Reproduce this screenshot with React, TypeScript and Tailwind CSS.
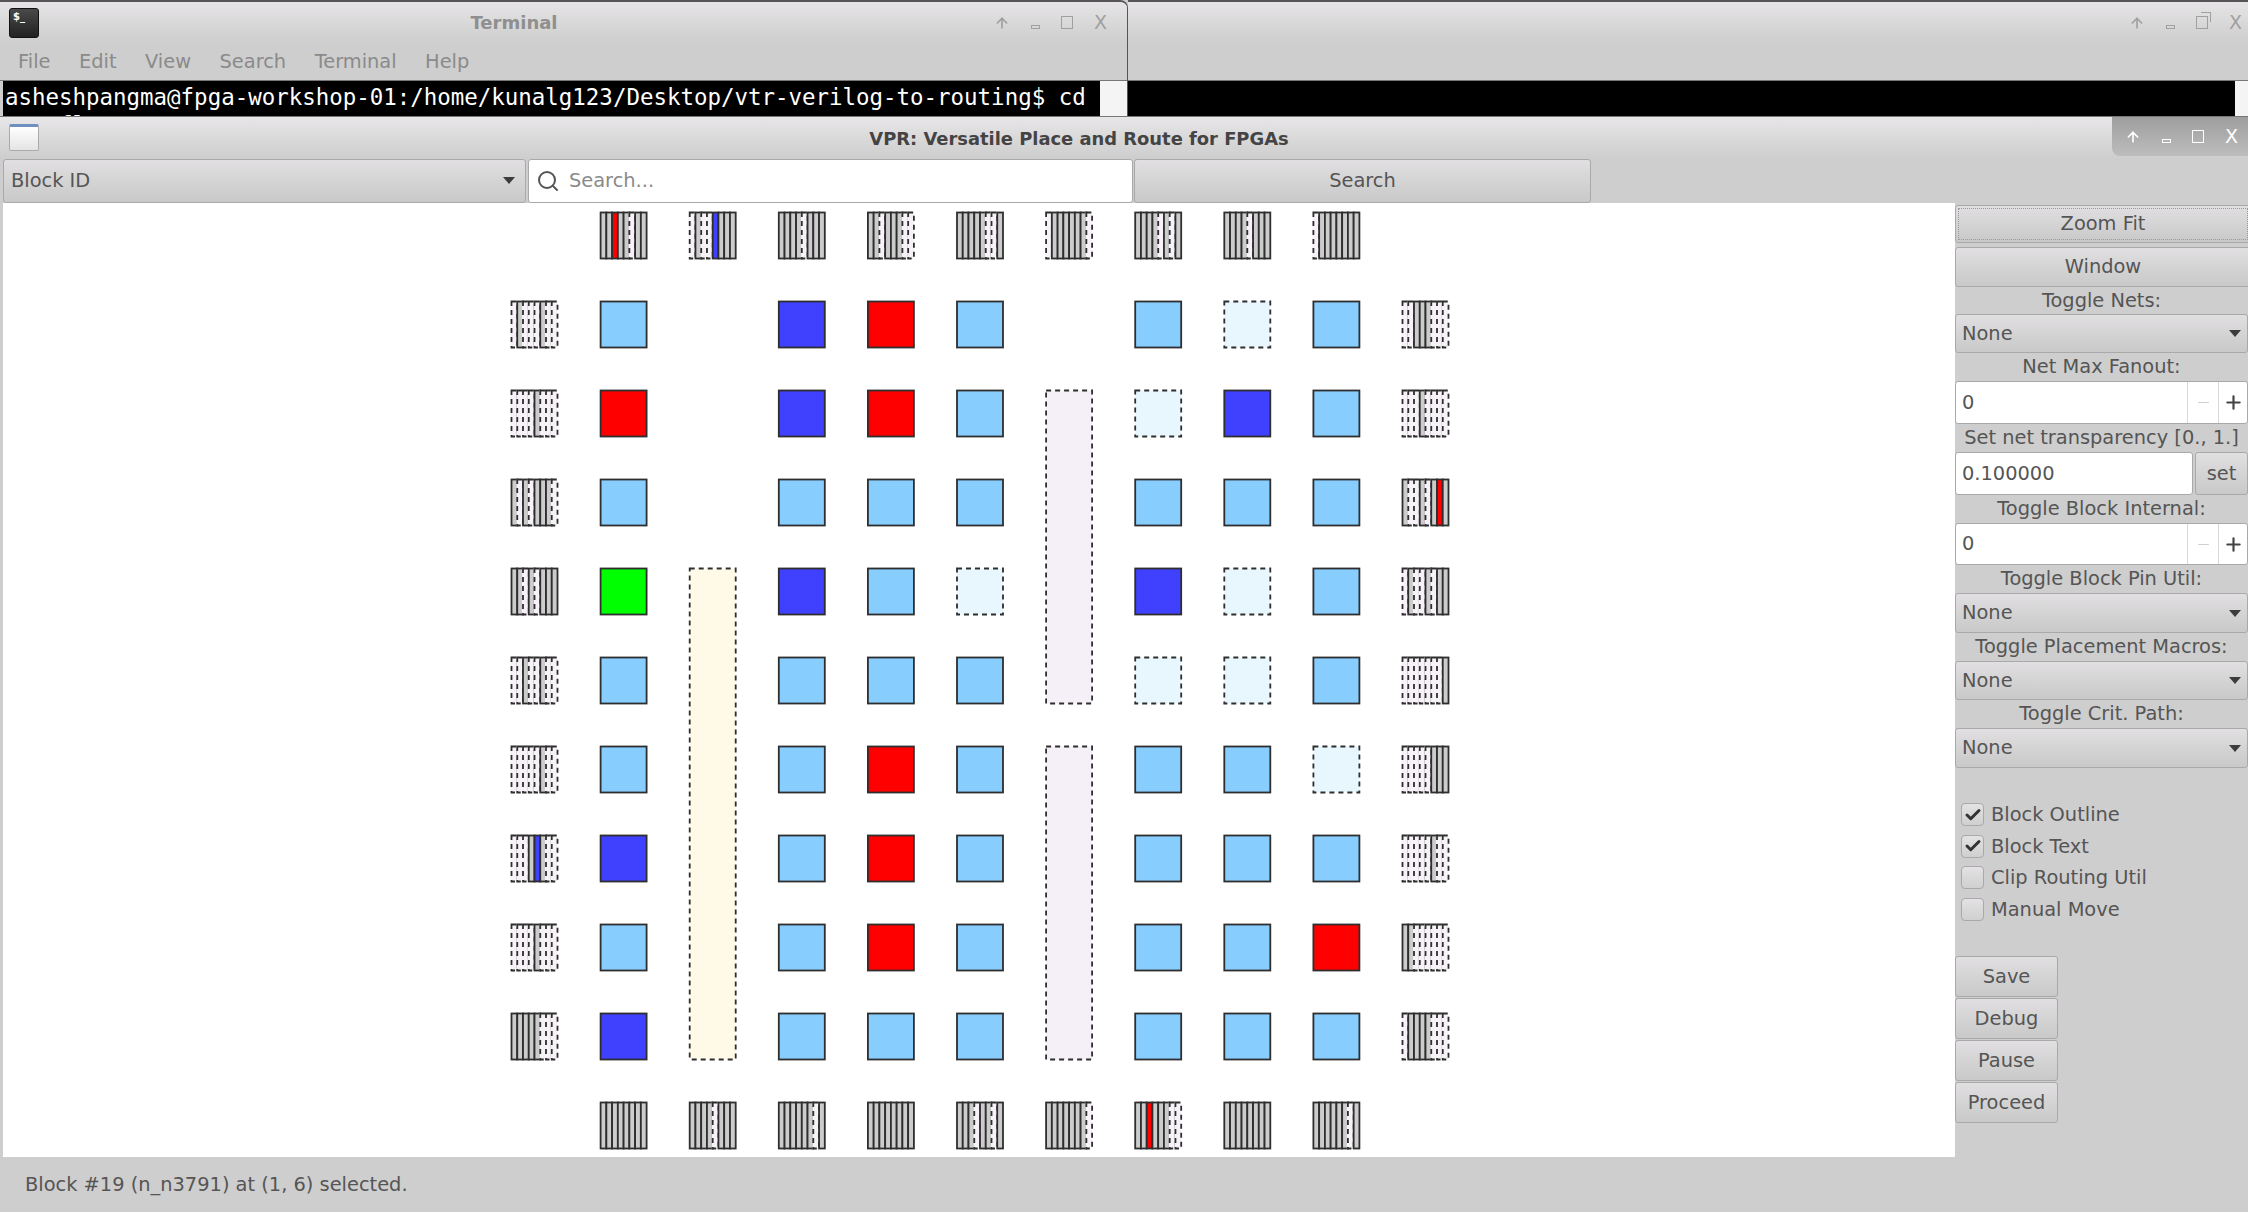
import { ArrowUp, Check, Minus, Plus, Search } from 'lucide-react';
import type { ReactNode } from 'react';

const COL_X = (i: number) => 511.5 + 89.1 * i;
const ROW_Y = (i: number) => 212.5 + 89 * i;
const SIZE = 46;

const COLORS: Record<string, string> = {
  L: '#87ceff',
  B: '#4040ff',
  R: '#ff0000',
  G: '#00ff00',
  E: '#e8f6fe',
};

// rows 1..9, columns 1..9 of the logic grid
const LOGIC = [
  'L.BRL.LEL',
  'R.BRL.EBL',
  'L.LLL.LLL',
  'G.BLE.BEL',
  'L.LLL.EEL',
  'L.LRL.LLE',
  'B.LRL.LLL',
  'L.LRL.LLR',
  'B.LLL.LLL',
];

// each IO pad has 8 sub blocks: g used, d empty, r/b highlighted
const TOP_IO = ['ggrggdgg', 'dgddbggg', 'ggggdggg', 'ggdgggdd', 'gggggddg', 'dggggggd', 'ggggdgdg', 'ggggdggg', 'dggggggg'];
const BOTTOM_IO = ['gggggggg', 'ggggdggg', 'ggggggdg', 'gggggggg', 'gggdggdg', 'gggggggd', 'ggrgggdd', 'gggggggg', 'ggggggdg'];
const LEFT_IO = ['dgdddgdd', 'ddddgddd', 'gdgdgggd', 'ggdgdggg', 'ddgddgdd', 'dddddgdd', 'dddgbgdd', 'ddddgddd', 'gggggddd'];
const RIGHT_IO = ['ddgggddd', 'dddgdddd', 'gddgdgrg', 'dgddgdgg', 'dddddddg', 'dddddggg', 'dddddgdd', 'ggdddddd', 'dggggddd'];

const STROKE = '#2e2e2e';
const LINE = 1.8;

function IoPad({ x, y, cells }: { x: number; y: number; cells: string }) {
  const w = SIZE / 8;
  return (
    <g>
      {cells.split('').map((c, i) => {
        const cx = x + i * w;
        if (c === 'd') {
          return (
            <g key={i}>
              <rect x={cx - 1} y={y} width={w + 1} height={SIZE} fill="#f6f2f7" />
              <rect x={cx} y={y} width={w} height={SIZE} fill="none" stroke={STROKE} strokeWidth={LINE} strokeDasharray="5 4" />
            </g>
          );
        }
        const fill = c === 'r' ? '#ff0000' : c === 'b' ? '#4040ff' : '#cccccc';
        return <rect key={i} x={cx} y={y} width={w} height={SIZE} fill={fill} stroke={STROKE} strokeWidth={LINE} />;
      })}
    </g>
  );
}

function FpgaGrid() {
  return (
    <svg viewBox="3 203 1952 954" className="block h-full w-full">
      {TOP_IO.map((cells, i) => (
        <IoPad key={i} x={COL_X(i + 1)} y={ROW_Y(0)} cells={cells} />
      ))}
      {BOTTOM_IO.map((cells, i) => (
        <IoPad key={i} x={COL_X(i + 1)} y={ROW_Y(10)} cells={cells} />
      ))}
      {LEFT_IO.map((cells, i) => (
        <IoPad key={i} x={COL_X(0)} y={ROW_Y(i + 1)} cells={cells} />
      ))}
      {RIGHT_IO.map((cells, i) => (
        <IoPad key={i} x={COL_X(10)} y={ROW_Y(i + 1)} cells={cells} />
      ))}

      {LOGIC.map((row, r) =>
        row.split('').map((c, i) =>
          c === '.' ? null : (
            <rect
              key={`${r}-${i}`}
              x={COL_X(i + 1)}
              y={ROW_Y(r + 1)}
              width={SIZE}
              height={SIZE}
              fill={COLORS[c]}
              stroke={STROKE}
              strokeWidth={LINE}
              strokeDasharray={c === 'E' ? '5 4' : undefined}
            />
          )
        )
      )}

      {/* memory columns */}
      <rect x={COL_X(2)} y={ROW_Y(4)} width={SIZE} height={ROW_Y(9) - ROW_Y(4) + SIZE} fill="#fff9e8" stroke={STROKE} strokeWidth={LINE} strokeDasharray="5 4" />
      <rect x={COL_X(6)} y={ROW_Y(2)} width={SIZE} height={ROW_Y(5) - ROW_Y(2) + SIZE} fill="#f5eff7" stroke={STROKE} strokeWidth={LINE} strokeDasharray="5 4" />
      <rect x={COL_X(6)} y={ROW_Y(6)} width={SIZE} height={ROW_Y(9) - ROW_Y(6) + SIZE} fill="#f5eff7" stroke={STROKE} strokeWidth={LINE} strokeDasharray="5 4" />
    </svg>
  );
}

function WindowButtons({ tone, restore }: { tone: string; restore?: boolean }) {
  return (
    <div className={`flex items-center gap-[21px] ${tone}`}>
      <ArrowUp className="h-[16px] w-[16px]" strokeWidth={2.5} />
      <span className="mt-[9px] h-[4px] w-[9px] border border-current" />
      {restore ? (
        <span className="relative h-[13px] w-[12px] border border-current">
          <span className="absolute top-[-5px] right-[-4px] h-[10px] w-[10px] border-t border-r border-current" />
        </span>
      ) : (
        <span className="h-[13px] w-[12px] border border-current" />
      )}
      <span className="text-[19px] leading-none">X</span>
    </div>
  );
}

function TerminalIcon() {
  return (
    <div className="h-[30px] w-[30px] rounded-[3px] border border-[#111] bg-gradient-to-b from-[#4a4a4a] to-[#222] pt-[3px] pl-[3px] text-[10px] leading-none font-bold text-white">
      $_
    </div>
  );
}

function PanelButton({ className, children }: { className: string; children: ReactNode }) {
  return (
    <button className={`flex shrink-0 items-center justify-center rounded-[3px] border border-[#a9a9a9] bg-gradient-to-b from-[#e1dfe1] to-[#c9c9c9] text-[19.4px] text-[#555] ${className}`}>
      {children}
    </button>
  );
}

function Label({ text, className }: { text: string; className: string }) {
  return <div className={`flex shrink-0 items-center justify-center text-[19.4px] whitespace-nowrap text-[#555] ${className}`}>{text}</div>;
}

function Combo({ text, className }: { text: string; className: string }) {
  return (
    <div className={`flex shrink-0 items-center justify-between rounded-[3px] border border-[#a9a9a9] bg-gradient-to-b from-[#e1dfe1] to-[#c9c9c9] pr-[6px] pl-[6px] text-[19.4px] text-[#555] ${className}`}>
      <span>{text}</span>
      <span className="h-0 w-0 border-x-[6px] border-t-[7px] border-x-transparent border-t-[#3c3c3c]" />
    </div>
  );
}

function Spin({ className }: { className: string }) {
  return (
    <div className={`flex shrink-0 items-stretch rounded-[3px] border border-[#a9a9a9] bg-white text-[19.4px] text-[#555] ${className}`}>
      <span className="flex flex-1 items-center pl-[6px]">0</span>
      <span className="flex w-[31px] items-center justify-center border-l border-[#d8d8d8] text-[#d0d0d0]">
        <Minus className="h-[17px] w-[17px]" strokeWidth={1.5} />
      </span>
      <span className="flex w-[29px] items-center justify-center border-l border-[#d8d8d8] text-[#444]">
        <Plus className="h-[21px] w-[21px]" strokeWidth={2.5} />
      </span>
    </div>
  );
}

function CheckRow({ text, checked }: { text: string; checked?: boolean }) {
  return (
    <div className="flex h-[31.5px] items-center pl-[6px] text-[19.4px] text-[#555]">
      <span className="flex h-[23px] w-[23px] items-center justify-center rounded-[4px] border border-[#a9a9a9] bg-gradient-to-b from-[#e4e2e4] to-[#d0d0d0] text-[#333]">
        {checked && <Check className="h-[18px] w-[18px]" strokeWidth={4} />}
      </span>
      <span className="ml-[7px]">{text}</span>
    </div>
  );
}

export default function App() {
  return (
    <div className="flex h-[1212px] w-[2248px] flex-col overflow-hidden bg-[#cecece] [font-family:'DejaVu_Sans',sans-serif]">
      {/* Terminal windows behind */}
      <div className="flex h-[116px] shrink-0">
        <div className="flex w-[1128px] shrink-0 flex-col overflow-hidden rounded-tr-[8px] border-t-2 border-r border-[#555] bg-[#cecece]">
          <div className="relative flex h-[41px] items-center bg-gradient-to-b from-[#e6e4e6] to-[#cecece] pl-[9px]">
            <TerminalIcon />
            <span className="absolute left-0 w-[1028px] text-center text-[18px] font-bold text-[#8f8f8f]">Terminal</span>
            <div className="ml-auto pr-[20px]">
              <WindowButtons tone="text-[#a0a0a0]" />
            </div>
          </div>
          <div className="flex h-[37px] items-center gap-[28.5px] pl-[18px] text-[19.4px] text-[#8a8a8a]">
            <span>File</span>
            <span>Edit</span>
            <span>View</span>
            <span>Search</span>
            <span>Terminal</span>
            <span>Help</span>
          </div>
          <div className="flex h-[36px] border-t border-[#777]">
            <div className="w-[3px] bg-[#cecece]" />
            <div className="flex-1 overflow-hidden bg-black pt-[2px] pl-[2px] font-['DejaVu_Sans_Mono',monospace] text-[22.45px] leading-[28px] whitespace-pre text-white">
              asheshpangma@fpga-workshop-01:/home/kunalg123/Desktop/vtr-verilog-to-routing$ cd{'\n'}vtr_flow/
            </div>
            <div className="w-[27px] bg-[#f4f4f4]" />
          </div>
        </div>
        <div className="flex flex-1 flex-col border-t-2 border-[#555] bg-[#cecece]">
          <div className="flex h-[41px] items-center justify-end bg-gradient-to-b from-[#e6e4e6] to-[#cecece] pr-[6px]">
            <WindowButtons tone="text-[#a0a0a0]" restore />
          </div>
          <div className="h-[37px]" />
          <div className="flex h-[36px] border-t border-[#777]">
            <div className="flex-1 bg-black" />
            <div className="w-[13px] bg-[#f4f4f4]" />
          </div>
        </div>
      </div>

      {/* VPR window */}
      <div className="flex min-h-0 flex-1 flex-col border-t border-[#777]">
        <div className="relative flex h-[41px] shrink-0 items-center bg-gradient-to-b from-[#e8e6e8] to-[#cecece] pl-[9px]">
          <div className="h-[27px] w-[30px] rounded-[2px] border border-[#aaa] border-t-[3px] border-t-[#6f8fc0] bg-gradient-to-b from-white to-[#e4e4e4]" />
          <span className="absolute top-[9px] left-0 w-[2158px] text-center text-[17.9px] font-bold text-[#444]">
            VPR: Versatile Place and Route for FPGAs
          </span>
          <div className="absolute top-0 right-0 flex h-[39px] w-[136px] items-center justify-end rounded-bl-[8px] bg-gradient-to-b from-[#9e9e9e] to-[#bdbdbd] pr-[10px]">
            <WindowButtons tone="text-white" />
          </div>
        </div>

        <div className="flex h-[45px] shrink-0 items-center pl-[3px]">
          <div className="flex h-[44px] w-[523px] items-center justify-between rounded-[3px] border border-[#a9a9a9] bg-gradient-to-b from-[#e1dfe1] to-[#c9c9c9] pr-[10px] pl-[7px] text-[19.4px] text-[#555]">
            <span>Block ID</span>
            <span className="h-0 w-0 border-x-[6px] border-t-[7px] border-x-transparent border-t-[#3c3c3c]" />
          </div>
          <div className="ml-[2px] flex h-[44px] w-[605px] items-center rounded-[3px] border border-[#a9a9a9] bg-white pl-[7px] text-[19.4px] text-[#8a8a8a]">
            <Search className="h-[24px] w-[24px] text-[#555]" strokeWidth={2} />
            <span className="ml-[9px]">Search...</span>
          </div>
          <PanelButton className="ml-px h-[44px] w-[457px]">Search</PanelButton>
        </div>

        <div className="flex min-h-0 flex-1">
          <div className="flex w-[1955px] shrink-0 flex-col">
            <div className="ml-[3px] h-[954px] bg-white">
              <FpgaGrid />
            </div>
            <div className="flex flex-1 items-center pl-[25px] text-[19.4px] text-[#555]">
              Block #19 (n_n3791) at (1, 6) selected.
            </div>
          </div>

          {/* Control panel */}
          <div className="flex w-[293px] shrink-0 flex-col pt-[2px]">
            <PanelButton className="relative h-[38px] w-[296px]">
              <span className="absolute inset-[2px] border border-dotted border-[#999]" />
              Zoom Fit
            </PanelButton>
            <PanelButton className="mt-[4px] h-[40px] w-[296px]">Window</PanelButton>
            <Label text="Toggle Nets:" className="h-[27px]" />
            <Combo text="None" className="h-[39px]" />
            <Label text="Net Max Fanout:" className="h-[28px]" />
            <Spin className="h-[43px]" />
            <Label text="Set net transparency [0., 1.]" className="h-[28px]" />
            <div className="flex h-[43px] shrink-0">
              <div className="flex w-[238px] items-center rounded-[3px] border border-[#a9a9a9] bg-white pl-[6px] text-[19.4px] text-[#555]">
                0.100000
              </div>
              <PanelButton className="ml-[2px] flex-1">set</PanelButton>
            </div>
            <Label text="Toggle Block Internal:" className="h-[28px]" />
            <Spin className="h-[42px]" />
            <Label text="Toggle Block Pin Util:" className="h-[28px]" />
            <Combo text="None" className="h-[40px]" />
            <Label text="Toggle Placement Macros:" className="h-[28px]" />
            <Combo text="None" className="h-[39px]" />
            <Label text="Toggle Crit. Path:" className="h-[28px]" />
            <Combo text="None" className="h-[40px]" />

            <div className="mt-[31px] flex flex-col">
              <CheckRow text="Block Outline" checked />
              <CheckRow text="Block Text" checked />
              <CheckRow text="Clip Routing Util" />
              <CheckRow text="Manual Move" />
            </div>

            <div className="mt-[31px] flex w-[103px] flex-col gap-px">
              <PanelButton className="h-[41px]">Save</PanelButton>
              <PanelButton className="h-[41px]">Debug</PanelButton>
              <PanelButton className="h-[41px]">Pause</PanelButton>
              <PanelButton className="h-[41px]">Proceed</PanelButton>
            </div>
          </div>
        </div>
      </div>
    </div>
  );
}
